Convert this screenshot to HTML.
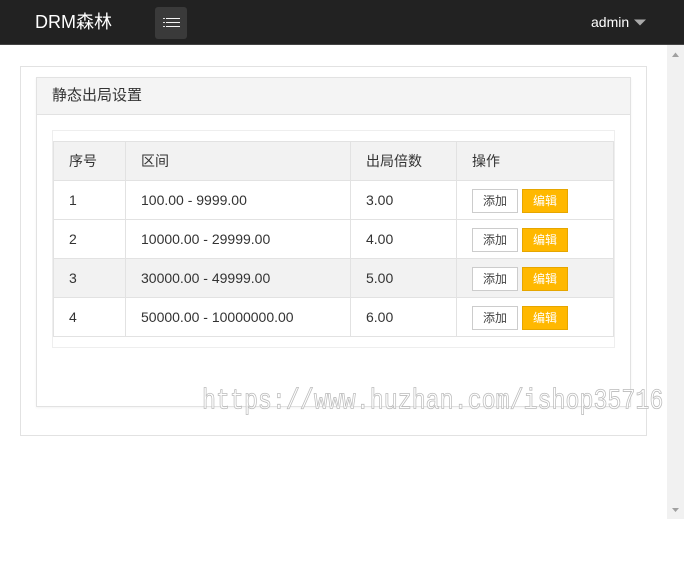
<!DOCTYPE html>
<html lang="zh">
<head>
<meta charset="utf-8">
<title>静态出局设置</title>
<style>
html,body{margin:0;padding:0;background:#fff;}
body{width:684px;height:561px;position:relative;overflow:hidden;font-family:"Liberation Sans","Noto Sans CJK SC",sans-serif;font-size:14px;color:#333;}
.a{position:absolute;box-sizing:border-box;}
.t{position:absolute;white-space:nowrap;line-height:20px;}
.btn{position:absolute;box-sizing:border-box;width:46px;height:24px;line-height:22px;text-align:center;font-size:12px;}
.w{background:#fff;border:1px solid #ccc;color:#444;}
.y{background:#ffb800;border:1px solid #e6a600;color:#fff;}
</style>
</head>
<body>
<div class="a" style="left:0;top:0;width:684px;height:45px;background:#222;border-bottom:1px solid #444;"></div>
<div class="t" style="left:35px;top:11px;font-size:18px;color:#fff;line-height:22px;">DRM森林</div>
<div class="a" style="left:155px;top:7px;width:32px;height:32px;background:#3a3a3a;border-radius:3px;"></div>
<svg class="a" style="left:155px;top:7px;" width="32" height="32" viewBox="0 0 32 32">
<path d="M8 11.500H10M8 15.500H10M8 19.500H10" stroke="#ddd" stroke-width="1" fill="none"/>
<path d="M11 11.500H25M11 15.500H25M11 19.500H25" stroke="#f5f5f5" stroke-width="1" fill="none"/>
</svg>
<div class="t" style="left:591px;top:12px;color:#fff;">admin</div>
<svg class="a" style="left:634px;top:19px;" width="13" height="8" viewBox="0 0 13 8"><path d="M0 .5H12L6 6.500Z" fill="#aaa"/></svg>

<div class="a" style="left:667px;top:45px;width:17px;height:474px;background:#f1f1f1;"></div>
<svg class="a" style="left:667px;top:45px;" width="17" height="17" viewBox="0 0 17 17"><path d="M5 12H12L8.500 7.500Z" fill="#a0a0a0"/></svg>
<svg class="a" style="left:667px;top:502px;" width="17" height="17" viewBox="0 0 17 17"><path d="M5 6H12L8.500 10Z" fill="#a0a0a0"/></svg>

<div class="a" style="left:20px;top:66px;width:627px;height:370px;border:1px solid #e2e2e2;"></div>
<div class="a" style="left:36px;top:77px;width:595px;height:330px;border:1px solid #e2e2e2;box-shadow:0 1px 2px rgba(0,0,0,.05);"></div>
<div class="a" style="left:37px;top:78px;width:593px;height:37px;background:#f4f4f4;border-bottom:1px solid #e2e2e2;"></div>
<div class="t" style="left:52px;top:86px;font-size:15px;">静态出局设置</div>

<div class="a" style="left:52px;top:130px;width:563px;height:218px;border:1px solid #eee;"></div>
<div class="a" style="left:53px;top:141px;width:561px;height:196px;border:1px solid #e2e2e2;"></div>
<div class="a" style="left:54px;top:142px;width:559px;height:38px;background:#f2f2f2;"></div>
<div class="a" style="left:54px;top:259px;width:559px;height:38px;background:#f2f2f2;"></div>
<div class="a" style="left:54px;top:180px;width:559px;height:1px;background:#e2e2e2;"></div>
<div class="a" style="left:54px;top:219px;width:559px;height:1px;background:#e2e2e2;"></div>
<div class="a" style="left:54px;top:258px;width:559px;height:1px;background:#e2e2e2;"></div>
<div class="a" style="left:54px;top:297px;width:559px;height:1px;background:#e2e2e2;"></div>
<div class="a" style="left:125px;top:142px;width:1px;height:194px;background:#e2e2e2;"></div>
<div class="a" style="left:350px;top:142px;width:1px;height:194px;background:#e2e2e2;"></div>
<div class="a" style="left:456px;top:142px;width:1px;height:194px;background:#e2e2e2;"></div>

<div class="t" style="left:69px;top:151px;">序号</div>
<div class="t" style="left:141px;top:151px;">区间</div>
<div class="t" style="left:366px;top:151px;">出局倍数</div>
<div class="t" style="left:472px;top:151px;">操作</div>

<div class="t" style="left:69px;top:190px;">1</div>
<div class="t" style="left:141px;top:190px;">100.00 - 9999.00</div>
<div class="t" style="left:366px;top:190px;">3.00</div>
<div class="btn w" style="left:472px;top:189px;">添加</div>
<div class="btn y" style="left:522px;top:189px;">编辑</div>

<div class="t" style="left:69px;top:229px;">2</div>
<div class="t" style="left:141px;top:229px;">10000.00 - 29999.00</div>
<div class="t" style="left:366px;top:229px;">4.00</div>
<div class="btn w" style="left:472px;top:228px;">添加</div>
<div class="btn y" style="left:522px;top:228px;">编辑</div>

<div class="t" style="left:69px;top:268px;">3</div>
<div class="t" style="left:141px;top:268px;">30000.00 - 49999.00</div>
<div class="t" style="left:366px;top:268px;">5.00</div>
<div class="btn w" style="left:472px;top:267px;">添加</div>
<div class="btn y" style="left:522px;top:267px;">编辑</div>

<div class="t" style="left:69px;top:307px;">4</div>
<div class="t" style="left:141px;top:307px;">50000.00 - 10000000.00</div>
<div class="t" style="left:366px;top:307px;">6.00</div>
<div class="btn w" style="left:472px;top:306px;">添加</div>
<div class="btn y" style="left:522px;top:306px;">编辑</div>

<div class="t" style="left:202px;top:388px;font-family:'Liberation Mono',monospace;font-size:23.3px;line-height:30px;color:rgba(255,255,255,.75);-webkit-text-stroke:.7px #bbb;transform:scaleY(1.22);transform-origin:0 24px;">https://www.huzhan.com/ishop35716</div>
</body>
</html>
